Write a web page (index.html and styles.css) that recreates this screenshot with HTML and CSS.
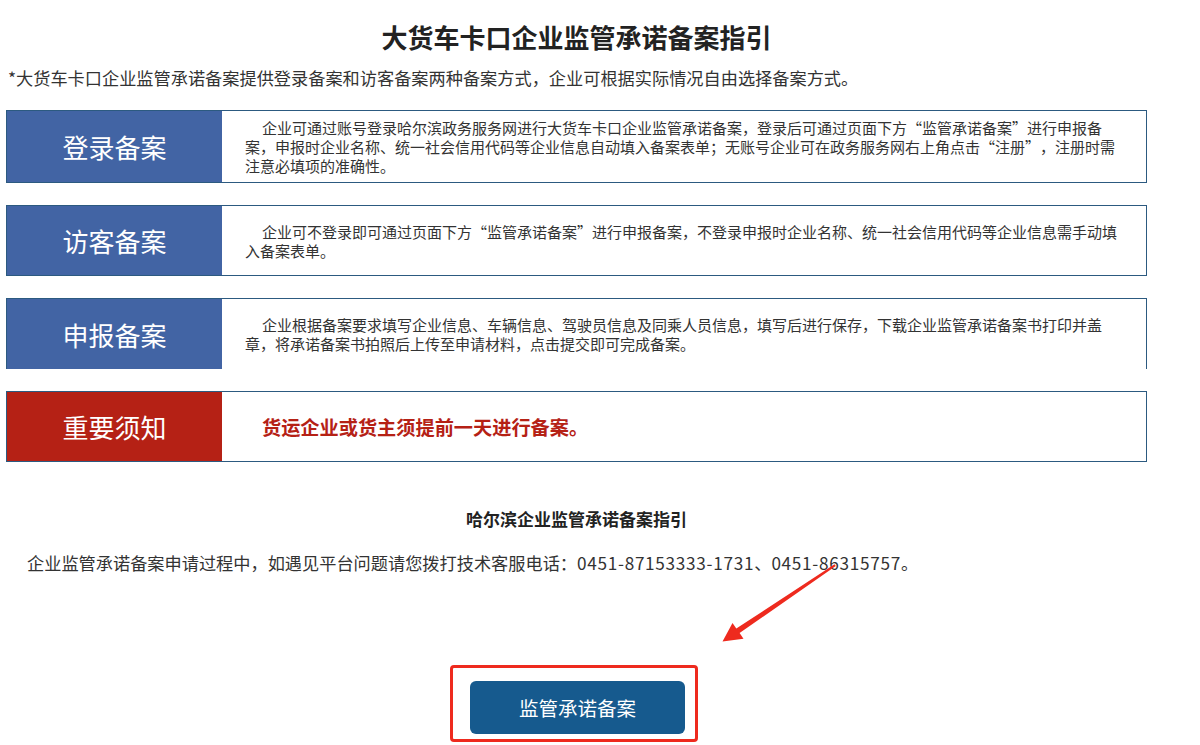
FILE: index.html
```html
<!DOCTYPE html>
<html lang="zh-CN">
<head>
  <meta charset="UTF-8">
  <title>大货车卡口企业监管承诺备案指引</title>
  <meta name="viewport" content="width=device-width, initial-scale=1.0">
  <link rel="stylesheet" href="styles.css">
</head>
<body>
  <div class="page">
    <h1 class="title">大货车卡口企业监管承诺备案指引</h1>
    <p class="intro">*大货车卡口企业监管承诺备案提供登录备案和访客备案两种备案方式，企业可根据实际情况自由选择备案方式。</p>

    <div class="card card-tall">
      <div class="card-label">登录备案</div>
      <div class="card-text">企业可通过账号登录哈尔滨政务服务网进行大货车卡口企业监管承诺备案，登录后可通过页面下方“监管承诺备案”进行申报备案，申报时企业名称、统一社会信用代码等企业信息自动填入备案表单；无账号企业可在政务服务网右上角点击“注册”，注册时需注意必填项的准确性。</div>
    </div>

    <div class="card">
      <div class="card-label">访客备案</div>
      <div class="card-text">企业可不登录即可通过页面下方“监管承诺备案”进行申报备案，不登录申报时企业名称、统一社会信用代码等企业信息需手动填入备案表单。</div>
    </div>

    <div class="card card-open">
      <div class="card-label">申报备案</div>
      <div class="card-text">企业根据备案要求填写企业信息、车辆信息、驾驶员信息及同乘人员信息，填写后进行保存，下载企业监管承诺备案书打印并盖章，将承诺备案书拍照后上传至申请材料，点击提交即可完成备案。</div>
    </div>

    <div class="card card-notice">
      <div class="card-label">重要须知</div>
      <div class="card-text">货运企业或货主须提前一天进行备案。</div>
    </div>

    <h2 class="subtitle">哈尔滨企业监管承诺备案指引</h2>
    <p class="contact">企业监管承诺备案申请过程中，如遇见平台问题请您拨打技术客服电话：<span class="tel">0451-87153333-1731</span>、<span class="tel">0451-86315757</span>。</p>

    <div class="action">
      <div class="highlight">
        <button type="button" class="btn">监管承诺备案</button>
      </div>
    </div>
  </div>

  <!-- 标注箭头 -->
  <svg class="arrow" width="1200" height="745" viewBox="0 0 1200 745">
    <polygon points="834.5,564.3 835.8,566 739.6,633 743.5,638.8 722.5,641.5 732.5,623 736.3,628.6" fill="#ee2a1e"/>
  </svg>
</body>
</html>
```

FILE: styles.css
```css
body {
  margin: 0;
  padding: 0;
  background: #fff;
  color: #333;
  font-family: "Noto Sans CJK SC", "Microsoft YaHei", sans-serif;
  position: relative;
  min-height: 745px;
}
.page {
  width: 1141px;
  margin-left: 6px;
}
.title {
  margin: 0;
  padding-top: 20px;
  font-size: 26px;
  line-height: 34px;
  font-weight: bold;
  color: #222;
  text-align: center;
}
.intro {
  margin: 12px 0 20px;
  padding-left: 2px;
  font-size: 17.2px;
  line-height: 24px;
}
.card {
  display: flex;
  min-height: 69px;
  border: 1px solid #2c5a80;
  margin-bottom: 22px;
}
.card-open {
  border-bottom: none;
  min-height: 70px;
}
.card-label {
  width: 215px;
  flex-shrink: 0;
  display: flex;
  align-items: center;
  justify-content: center;
  background: #4264a4;
  color: #fff;
  font-size: 26px;
}
.card-text {
  width: 876px;
  padding: 7px 25px 7px 23px;
  align-self: center;
  text-indent: 17px;
  font-size: 15px;
  line-height: 19px;
  text-spacing-trim: space-all;
  font-feature-settings: "fwid";
}
.card-notice .card-label {
  background: #b52115;
}
.card-notice .card-text {
  color: #b52115;
  font-size: 19.2px;
  font-weight: bold;
  line-height: 26px;
}
.subtitle {
  margin: 45px 0 0;
  font-size: 17px;
  line-height: 24px;
  font-weight: bold;
  color: #222;
  text-align: center;
}
.contact {
  margin: 20px 0 0;
  padding-left: 21px;
  font-size: 17.2px;
  line-height: 24px;
}
.tel {
  letter-spacing: 0.7px;
}
.action {
  display: flex;
  justify-content: center;
  margin-top: 90px;
}
.highlight {
  margin-right: 5px;
  padding: 13px 10px 5px 17px;
  border: 3px solid #ee2a1e;
  border-radius: 4px;
}
.btn {
  display: block;
  width: 215px;
  height: 53px;
  border: none;
  border-radius: 6px;
  background: #165a8e;
  color: #fff;
  font-family: inherit;
  font-size: 19.5px;
  cursor: pointer;
}
.arrow {
  position: absolute;
  left: 0;
  top: 0;
  pointer-events: none;
}
```
